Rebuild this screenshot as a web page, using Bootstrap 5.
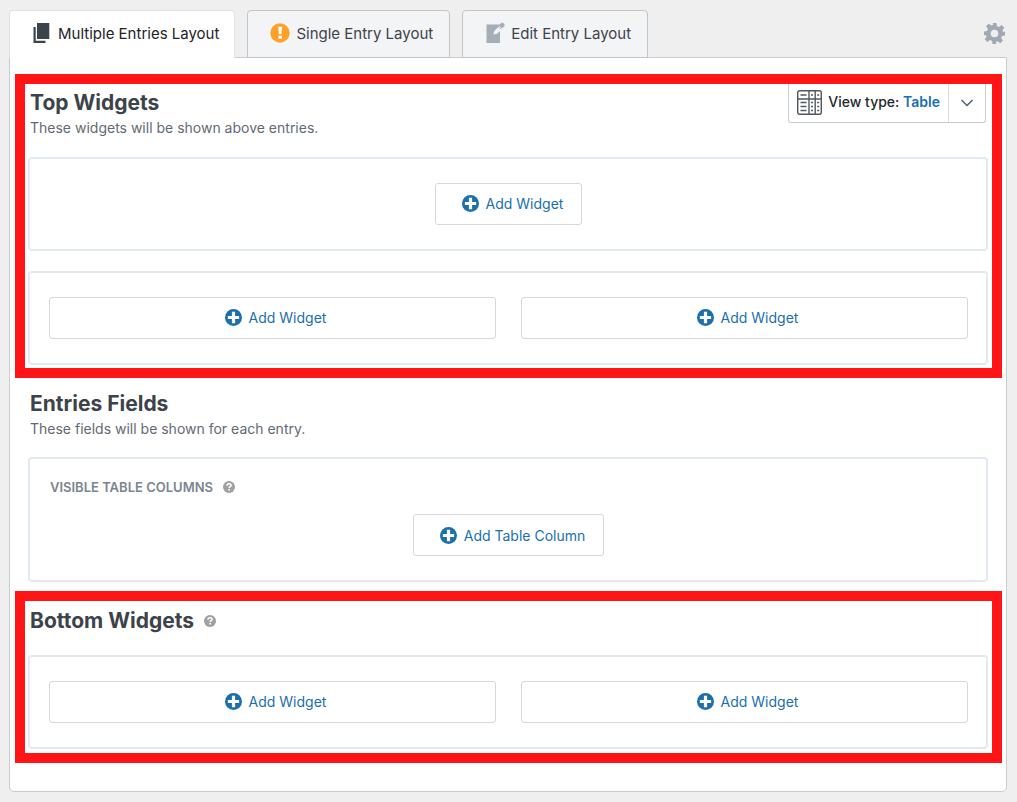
<!DOCTYPE html>
<html lang="en">
<head>
<meta charset="utf-8">
<meta name="viewport" content="width=device-width, initial-scale=1">
<title>View layout</title>
<link rel="stylesheet" href="https://cdn.jsdelivr.net/npm/bootstrap@5.3.0/dist/css/bootstrap.min.css">
<style>
  body { background: #efefef; font-family: Inter, "Liberation Sans", sans-serif; font-size: 14px; line-height: 20px; color: #3c434a; }
  .view-editor { padding: 10px 10px 10px 9px; }
  .layout-tabs { gap: 12px; border: 0; margin-bottom: -1px; }
  .layout-tabs .nav-link { display: flex; align-items: center; height: 48px; padding: 0 16px 0 22px; border: 1px solid #c3c4c7; border-radius: 4px 4px 0 0; background: #f3f4f6; color: #3c434a; font-size: 15px; margin: 0; }
  .layout-tabs .nav-link.active { background: #fff; border-bottom-color: #fff; color: #1d2327; padding-right: 15px; }
  .layout-tabs svg { margin: 0 6px 2px 0; }
  .settings-btn { line-height: 0; padding: 0; margin-right: 2px; border: 0; }
  .view-panel { background: #fff; border: 1px solid #c9ccd0; border-radius: 0 0 5px 5px; padding: 16px 4px 28px 5px; }
  .zone { padding: 0 4px 3px 3px; border: 10px solid #fff; border-width: 0 10px; }
  .zone-marked { border: 10px solid #ff1515; }
  .zone-head { min-height: 73px; padding-left: 2px; padding-right: 2px; }
  .zone-head h2 { font-size: 21px; line-height: 30px; font-weight: 700; margin: 0; }
  .zone-head p { margin: 0; line-height: 20px; color: #5f6a74; }
  .zone-title { padding-top: 4px; }
  .zone-fields .zone-head { min-height: 79px; }
  .zone-fields .zone-title { padding-top: 11px; }
  .zone-fields { padding-bottom: 9px; }
  .zone-bottom .zone-head { min-height: 54px; }
  .zone-bottom .zone-title { padding-top: 5px; }
  .zone-bottom { padding-bottom: 4px; }
  .drop-area { border: 2px solid #e1eaf2; border-radius: 4px; padding: 24px 18px 24px 19px; }
  .drop-area + .drop-area { margin-top: 20px; }
  .drop-pair { gap: 25px; }
  .add-btn { display: flex; align-items: center; justify-content: center; gap: 7px; height: 42px; padding: 0 18px 1px 26px; border: 1px solid #d5d7da; border-radius: 3px; background: #fff; color: #1a6fad; font-size: 14px; }
  .add-btn:hover { border-color: #1a6fad; color: #1a6fad; }
  .drop-pair .add-btn { flex: 1 1 0; padding: 0 10px 1px 16px; }
  .columns-area { padding-top: 18px; }
  .columns-area h3 { font-size: 13px; line-height: 20px; font-weight: 600; color: #7b858f; margin: 0 0 17px 1px; }
  .columns-area .add-btn { padding-bottom: 0; }
  .help-gap { gap: 10px; }
  .view-type { height: 39px; border: 1px solid #c9ccd0; border-top: 0; border-radius: 0 0 3px 3px; background: #fff; }
  .view-type button { border: 0; background: none; padding: 0; color: #23282d; font-weight: 500; }
  .view-type .type-name { padding: 0 8px 2px; gap: 6px; }
  .view-type .type-name b { font-weight: 600; color: #1a6fad; }
  .view-type .type-toggle { width: 37px; border-left: 1px solid #dcdde0; padding-bottom: 2px; }
  .help-btn { border: 0; background: none; padding: 0; line-height: 0; color: #a0a0a0; }
</style>
</head>
<body>
<svg width="0" height="0" class="d-none" aria-hidden="true">
  <symbol id="plus" viewBox="0 0 16 16"><circle cx="8" cy="8" r="8" fill="currentColor"/><path d="M6.500 2.700h3v3.800h3.800v3H9.500v3.800h-3V9.500H2.700v-3h3.800z" fill="#fff"/></symbol>
  <symbol id="help" viewBox="0 0 12 12"><circle cx="6" cy="6" r="6" fill="currentColor"/><path d="M4 4.700C4 3.300 4.900 2.700 6 2.700s2.100.6 2.100 1.700c0 1.300-1.900 1.300-1.900 2.500" fill="none" stroke="#fff" stroke-width="1.500"/><path d="M5.300 7.900h1.700v1.500H5.300z" fill="#fff"/></symbol>
</svg>
<div class="view-editor">
  <header class="d-flex align-items-center justify-content-between">
    <nav class="nav nav-tabs layout-tabs" aria-label="Layouts">
      <a class="nav-link active" aria-current="page" href="#multiple"><svg width="20" height="20" viewBox="0 0 20 20" fill="#3c434a"><path d="M5 0h12.300v16H5zM1.500 4H3.700v13.700H13.500V20h-12z"/></svg>Multiple Entries Layout</a>
      <a class="nav-link" href="#single"><svg width="20" height="20" viewBox="0 0 20 20"><circle cx="10" cy="10" r="9.700" fill="#ffa029"/><path d="M8.300 3.800h3.800l-.6 7.500H8.900zM8.500 12.700h3.400v3H8.500z" fill="#fff"/></svg>Single Entry Layout</a>
      <a class="nav-link" href="#edit"><svg width="20" height="22" viewBox="0 0 20 22"><path d="M1.500 2.500H15V21H1.500z" fill="#a4aeb6"/><path d="M8.300 12.500l1-3.500L15 3.300 18 6.300l-6 5.500z" fill="#f3f4f6"/><path d="M13.800 3.500L16 1.200c1.800-1.600 4.800 1 3.200 3.100L17 6.600z" fill="#a4aeb6"/><path d="M12.800 4.300l3.500 3" stroke="#a4aeb6" fill="none" stroke-width=".8"/></svg>Edit Entry Layout</a>
    </nav>
    <button type="button" class="btn settings-btn" aria-label="Settings"><svg width="21" height="21" viewBox="-11 -11 22 22" fill="#a0a9b1"><path fill-rule="evenodd" d="M-2-11h4l.6 3.300 2.100.9 2.800-2 2.800 2.800-2 2.700.9 2.100L11-2v4l-3.200.5-.9 2.100 2 2.800-2.800 2.800-2.800-2-2.100.9L2 11h-4l-.6-3.200-2.100-.9-2.800 2-2.800-2.800 2-2.800-.9-2.100L-11 2v-4l3.200-.6.9-2.100-2-2.800 2.800-2.800 2.800 2 2.100-.9zM0-4a4 4 0 1 0 0 8 4 4 0 0 0 0-8z"/></svg></button>
  </header>
  <main class="view-panel">
    <section class="zone zone-marked">
      <div class="zone-head d-flex justify-content-between align-items-start">
        <div class="zone-title"><h2>Top Widgets</h2><p>These widgets will be shown above entries.</p></div>
        <div class="view-type d-flex">
          <button type="button" class="type-name d-flex align-items-center"><svg width="25" height="25" viewBox="0 0 25 25" fill="none" stroke="#50575e"><rect x=".7" y=".7" width="23.600" height="23.600" rx="2" stroke-width="1.400"/><path d="M1 9h23M12 1v23M18.200 1v23" stroke-width="1.400"/><path d="M3.500 5h6M3.500 12.500h6M3.500 16.500h6M3.500 20.500h6" stroke-width="1.300"/><path d="M14 5h2M14 12.500h2M14 16.500h2M14 20.500h2M20.200 5h2M20.200 12.500h2M20.200 16.500h2M20.200 20.500h2" stroke-width="1.300"/></svg><span>View type: <b>Table</b></span></button>
          <button type="button" class="type-toggle" aria-label="Change view type"><svg width="12" height="8" viewBox="0 0 12 8" fill="none" stroke="#50606f" stroke-width="1.500"><path d="M.5 1L6 6.500 11.500 1"/></svg></button>
        </div>
      </div>
      <div class="drop-area d-flex justify-content-center"><button type="button" class="btn add-btn"><svg width="17" height="17"><use href="#plus"/></svg>Add Widget</button></div>
      <div class="drop-area drop-pair d-flex">
        <button type="button" class="btn add-btn"><svg width="17" height="17"><use href="#plus"/></svg>Add Widget</button>
        <button type="button" class="btn add-btn"><svg width="17" height="17"><use href="#plus"/></svg>Add Widget</button>
      </div>
    </section>
    <section class="zone zone-fields">
      <div class="zone-head"><div class="zone-title"><h2>Entries Fields</h2><p>These fields will be shown for each entry.</p></div></div>
      <div class="drop-area columns-area">
        <h3 class="d-flex align-items-center help-gap text-uppercase">Visible Table Columns <button type="button" class="help-btn" aria-label="Help"><svg width="12" height="12"><use href="#help"/></svg></button></h3>
        <div class="d-flex justify-content-center"><button type="button" class="btn add-btn"><svg width="17" height="17"><use href="#plus"/></svg>Add Table Column</button></div>
      </div>
    </section>
    <section class="zone zone-marked zone-bottom">
      <div class="zone-head"><div class="zone-title d-flex align-items-center help-gap"><h2>Bottom Widgets</h2><button type="button" class="help-btn" aria-label="Help"><svg width="12" height="12"><use href="#help"/></svg></button></div></div>
      <div class="drop-area drop-pair d-flex">
        <button type="button" class="btn add-btn"><svg width="17" height="17"><use href="#plus"/></svg>Add Widget</button>
        <button type="button" class="btn add-btn"><svg width="17" height="17"><use href="#plus"/></svg>Add Widget</button>
      </div>
    </section>
  </main>
</div>
<script src="https://cdn.jsdelivr.net/npm/bootstrap@5.3.0/dist/js/bootstrap.bundle.min.js"></script>
</body>
</html>
